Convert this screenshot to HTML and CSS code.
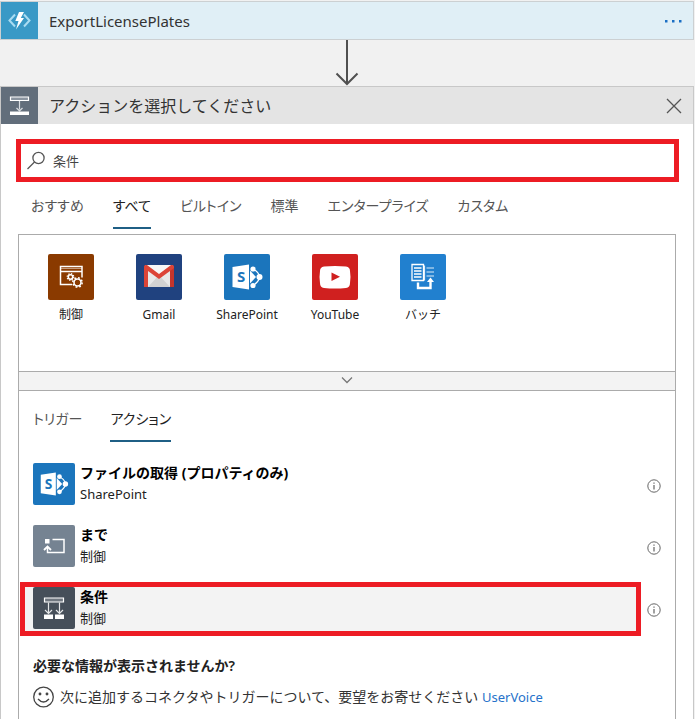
FILE: index.html
```html
<!DOCTYPE html>
<html lang="ja">
<head>
<meta charset="utf-8">
<meta name="viewport" content="width=device-width, initial-scale=1">
<title>アクションを選択してください</title>
<link rel="stylesheet" href="styles.css">
</head>
<body>
<section class="step">
  <span class="step-icon step-icon-function">
    <svg width="37" height="37" viewBox="0 0 37 37"><path d="M14 12.500 L8.500 18.500 L14 24.500 M23 12.500 L28.500 18.500 L23 24.500" fill="none" stroke="#a9dcf2" stroke-width="2"/><path d="M18 10h5l-3.200 6H23l-8 11.500 2.500-8.500h-3.200z" fill="#fff"/></svg>
  </span>
  <h2 class="step-title step-title-latin">ExportLicensePlates</h2>
  <button class="icon-button" type="button" aria-label="メニュー"><svg width="20" height="6" viewBox="0 0 20 6" fill="#1a6fc4"><rect x="1" y="2" width="2.500" height="2.500"/><rect x="8" y="2" width="2.500" height="2.500"/><rect x="15" y="2" width="2.500" height="2.500"/></svg></button>
</section>

<div class="connector"><svg width="24" height="46" viewBox="0 0 24 46" fill="none" stroke="#505050" stroke-width="2"><path d="M12 0V44M1.500 33.500 L12 44 L22.500 33.500"/></svg></div>

<main class="picker">
  <header class="picker-header">
    <span class="step-icon step-icon-picker">
      <svg width="37" height="37" viewBox="0 0 37 37"><path d="M9.500 10h18v3.500h-18z" fill="#8b95a0" stroke="#fff" stroke-width="1.200"/><path d="M18.500 14v8.500M15.500 21l3 3 3-3" fill="none" stroke="#d9dde1" stroke-width="1.200"/><path d="M9 24.500h19v3.500H9z" fill="#fff"/></svg>
    </span>
    <h1 class="step-title">アクションを選択してください</h1>
    <button class="icon-button" type="button" aria-label="閉じる"><svg width="20" height="16" viewBox="0 0 20 16"><path d="M3 1l14 14M17 1L3 15" stroke="#555" stroke-width="1.300"/></svg></button>
  </header>

  <label class="search">
    <svg width="18" height="20" viewBox="0 0 18 20" fill="none" stroke="#555" stroke-width="1.300"><circle cx="11.500" cy="7" r="5.600"/><path d="M7.500 11 L.5 18"/></svg>
    <input type="search" value="条件" aria-label="コネクタとアクションを検索する">
  </label>

  <nav class="tabs">
    <button class="tab" type="button">おすすめ</button>
    <button class="tab tab-active" type="button">すべて</button>
    <button class="tab" type="button">ビルトイン</button>
    <button class="tab" type="button">標準</button>
    <button class="tab" type="button">エンタープライズ</button>
    <button class="tab" type="button">カスタム</button>
  </nav>

  <div class="results">
    <div class="connectors">
      <button class="tile" type="button">
        <svg class="tile-icon control" viewBox="0 0 46 46" fill="none" stroke="#fff"><path d="M24 30.500H12.500v-18h21.500v11M12.500 17.500H34" stroke-width="1.500"/><path d="M12.500 14.500H34" stroke-width="1" opacity=".5"/><circle cx="22.500" cy="23" r="2.200" stroke-width="1.500"/><circle cx="22.500" cy="23" r="3.300" stroke-width="1.300" stroke-dasharray="1.300 1.292"/><circle cx="29.500" cy="28.500" r="3.500" stroke-width="1.600"/><circle cx="29.500" cy="28.500" r="4.700" stroke-width="1.500" stroke-dasharray="1.800 1.891"/></svg>
        <span>制御</span>
      </button>
      <button class="tile" type="button">
        <svg class="tile-icon gmail" viewBox="0 0 46 46"><path d="M9 11h28v22H9z" fill="#e8e8e8"/><path d="M12 33l11-12 11 12z" fill="#d2d2d2"/><path d="M9 11h28L23 22z" fill="#f7f7f7"/><path d="M8 33V12.500Q8 11 9.500 11H11l12 9 12-9h1.500q1.500 0 1.500 1.500V33h-4V17L23 25 12 17v16z" fill="#dc4437"/><path d="M34 17v16h4V14z" fill="#c5352c"/></svg>
        <span>Gmail</span>
      </button>
      <button class="tile" type="button">
        <svg class="tile-icon sharepoint" viewBox="0 0 46 46"><path d="M28.500 15Q34 17 36 23Q34 29 28.500 31.500" fill="none" stroke="#fff" stroke-width="1.200"/><g fill="#fff"><path d="M8.500 13 L25 10.500V35.500L8.500 33z"/><path d="M26 16.500L32 23l-6 6.500z"/><circle cx="29" cy="15" r="2.600"/><circle cx="35.500" cy="23" r="3"/><circle cx="29" cy="31.500" r="2.600"/></g><text x="13" y="28" class="sp-letter">S</text></svg>
        <span>SharePoint</span>
      </button>
      <button class="tile" type="button">
        <svg class="tile-icon youtube" viewBox="0 0 46 46"><path d="M12 12.500Q23 11.500 34 12.500Q38 13 38 17Q39 23 38 29Q38 33.500 34 34Q23 35 12 34Q8 33.500 8 29Q7 23 8 17Q8 13 12 12.500z" fill="#fff"/><path d="M19.500 18.500v8.500l8.500-4.200z" fill="#d0201f"/></svg>
        <span>YouTube</span>
      </button>
      <button class="tile" type="button">
        <svg class="tile-icon batch" viewBox="0 0 46 46" fill="none" stroke="#fff"><path d="M12 10.500h11.500v16H12z" stroke-width="1.300"/><path d="M14 14h7.500M14 17h7.500M14 20h7.500M14 23h7.500" stroke-width="1.300"/><path d="M24.500 11.500v15M26.500 14H34M26.500 18H34M26.500 22H34" stroke-width="1.200" opacity=".85"/><path d="M18 28.500v5.500h12.500v-7" stroke-width="2.400"/><path d="M27 28h7l-3.500-4.500z" fill="#fff" stroke="none"/></svg>
        <span>バッチ</span>
      </button>
    </div>

    <button class="expander" type="button" aria-label="展開"><svg width="14" height="8" viewBox="0 0 14 8"><path d="M2 1.500l5 5 5-5" fill="none" stroke="#777" stroke-width="1.300"/></svg></button>

    <div class="operations">
      <nav class="tabs tabs-operations">
        <button class="tab" type="button">トリガー</button>
        <button class="tab tab-active" type="button">アクション</button>
      </nav>

      <ul class="list">
        <li class="row">
          <button class="operation" type="button">
            <svg class="operation-icon sharepoint" viewBox="0 0 46 46"><path d="M28.500 15Q34 17 36 23Q34 29 28.500 31.500" fill="none" stroke="#fff" stroke-width="1.200"/><g fill="#fff"><path d="M8.500 13 L25 10.500V35.500L8.500 33z"/><path d="M26 16.500L32 23l-6 6.500z"/><circle cx="29" cy="15" r="2.600"/><circle cx="35.500" cy="23" r="3"/><circle cx="29" cy="31.500" r="2.600"/></g><text x="13" y="28" class="sp-letter">S</text></svg>
            <span class="operation-text"><strong>ファイルの取得 (プロパティのみ)</strong><span>SharePoint</span></span>
          </button>
          <button class="info" type="button" aria-label="詳細"><svg width="14" height="14" viewBox="0 0 14 14"><circle cx="7" cy="7" r="6.200" fill="none" stroke="#666"/><path d="M7 6v4.500M7 3.500v1.300" stroke="#555" stroke-width="1.100"/></svg></button>
        </li>
        <li class="row">
          <button class="operation" type="button">
            <svg class="operation-icon until" viewBox="0 0 42 42"><path d="M12 14h4.500v4.500H12z" fill="#fff"/><path d="M19.500 14.500H31v13H14.500V23" fill="none" stroke="#fff" stroke-width="1.500"/><path d="M11 25l3.500-3.500L18 25" fill="none" stroke="#fff" stroke-width="1.800"/></svg>
            <span class="operation-text"><strong>まで</strong><span>制御</span></span>
          </button>
          <button class="info" type="button" aria-label="詳細"><svg width="14" height="14" viewBox="0 0 14 14"><circle cx="7" cy="7" r="6.200" fill="none" stroke="#666"/><path d="M7 6v4.500M7 3.500v1.300" stroke="#555" stroke-width="1.100"/></svg></button>
        </li>
        <li class="row">
          <button class="operation operation-selected" type="button">
            <svg class="operation-icon condition" viewBox="0 0 42 42"><path d="M11.500 11h19v4h-19z" fill="#707780" stroke="#fff" stroke-width="1.200"/><path d="M15.500 15.500v10M26.500 15.500v10M12 23l3.500 3.500L19 23M23 23l3.500 3.500L30 23" fill="none" stroke="#e5e7e9" stroke-width="1.200"/><path d="M11 27.500h9V32h-9zM22 27.500h9V32h-9z" fill="#fff"/></svg>
            <span class="operation-text"><strong>条件</strong><span>制御</span></span>
          </button>
          <button class="info" type="button" aria-label="詳細"><svg width="14" height="14" viewBox="0 0 14 14"><circle cx="7" cy="7" r="6.200" fill="none" stroke="#666"/><path d="M7 6v4.500M7 3.500v1.300" stroke="#555" stroke-width="1.100"/></svg></button>
        </li>
      </ul>

      <footer class="feedback">
        <strong>必要な情報が表示されませんか?</strong>
        <p><svg width="22" height="22" viewBox="0 0 22 22" fill="none" stroke="#444" stroke-width="1.300"><circle cx="10.500" cy="11" r="9.800"/><path d="M5 13q5.500 6 11 0"/><circle cx="7" cy="8" r=".8" fill="#444"/><circle cx="14" cy="8" r=".8" fill="#444"/></svg><span>次に追加するコネクタやトリガーについて、要望をお寄せください <a href="#uservoice">UserVoice</a></span></p>
      </footer>
    </div>
  </div>
</main>
</body>
</html>
```
FILE: styles.css
```css
* {
  box-sizing: border-box;
}

body {
  display: flex;
  flex-direction: column;
  min-height: 100vh;
  margin: 0;
  padding: 1px 1px 0 0;
  background: #f1f1f1;
  color: #222;
  font: 14px/20px "Noto Sans", "Noto Sans CJK JP", sans-serif;
}

button {
  padding: 0;
  border: 0;
  background: none;
  color: inherit;
  font: inherit;
  cursor: pointer;
}

svg {
  display: block;
  flex: none;
}

.sp-letter {
  fill: #1b75bc;
  font: bold 15px "Noto Sans", sans-serif;
}

.step {
  display: flex;
  align-items: center;
  border: 1px solid #ccd0d2;
  background: #e0eff6;
}

.step-icon-function {
  background: #3999c6;
}

.step-icon-picker {
  background: #626e7b;
}

.step-title {
  flex: 1;
  margin: 0 0 0 11px;
  color: #333;
  font-size: 16px;
  font-weight: 400;
}

.step-title-latin {
  font-size: 15px;
}

.icon-button {
  margin-right: 9px;
}

.connector {
  display: flex;
  justify-content: center;
}

.picker {
  display: flex;
  flex: 1;
  flex-direction: column;
  border: 1px solid #c8c8c8;
  border-bottom: 0;
  background: #fff;
}

.picker-header {
  display: flex;
  align-items: center;
  background: #e4e4e4;
}

.search {
  display: flex;
  align-items: center;
  gap: 8px;
  height: 43px;
  margin: 15px 14px 0 15px;
  padding: 0 6px;
  border: 5px solid #ed1c24;
}

.search input {
  flex: 1;
  min-width: 0;
  padding: 0;
  border: 0;
  outline: 0;
  background: none;
  color: #444;
  font: inherit;
  font-size: 13px;
}

.tabs {
  display: flex;
  gap: 29px;
  margin: 12px 30px 5px;
}

.tab {
  height: 35px;
  padding-bottom: 10px;
  border-bottom: 2px solid transparent;
  color: #555;
  font-size: 14px;
  font-feature-settings: "palt";
  white-space: nowrap;
}

.tab-active {
  border-bottom-color: #1f5f85;
  color: #222;
}

.results {
  display: flex;
  flex: 1;
  flex-direction: column;
  margin: 0 17px;
  border: 1px solid #ababab;
  border-bottom: 0;
}

.connectors {
  display: flex;
  flex-wrap: wrap;
  align-content: flex-start;
  min-height: 136px;
  padding: 19px 8px;
}

.tile {
  display: flex;
  flex-direction: column;
  align-items: center;
  gap: 5px;
  width: 88px;
  font-size: 12px;
}

.tile-icon {
  width: 46px;
  height: 46px;
  border-radius: 2px;
}

.control {
  background: #8a3a00;
}

.gmail {
  background: #20427f;
}

.sharepoint {
  background: #1b75bc;
}

.youtube {
  background: #d0201f;
}

.batch {
  background: #2180cf;
}

.until {
  background: #758392;
}

.condition {
  background: #464f5a;
}

.expander {
  display: flex;
  align-items: center;
  justify-content: center;
  height: 20px;
  padding-bottom: 2px;
  border: solid #ababab;
  border-width: 1px 0;
  background: #f3f3f3;
}

.tabs-operations {
  gap: 28px;
  margin: 16px 14px;
}

.list {
  display: grid;
  gap: 8px;
  margin: 0;
  padding: 0 14px 0 1px;
  list-style: none;
}

.row {
  display: flex;
  align-items: center;
  gap: 6px;
}

.operation {
  display: flex;
  flex: 1;
  gap: 5px;
  padding: 0 8px 2px;
  border: 5px solid transparent;
  text-align: left;
}

.operation-selected {
  border-color: #ed1c24;
  background: #f3f3f3;
}

.operation-icon {
  width: 42px;
  height: 42px;
  border-radius: 2px;
}

.operation-text {
  display: grid;
  font-size: 13px;
}

.operation-text strong {
  color: #000;
  font-size: 14px;
}

.info {
  padding-top: 2px;
}

.feedback {
  padding: 20px 14px;
}

.feedback strong {
  font-weight: 600;
}

.feedback p {
  display: flex;
  align-items: center;
  gap: 5px;
  margin: 10px 0 0;
  color: #333;
}

.feedback a {
  color: #2672ca;
  font-size: 13px;
  text-decoration: none;
}
```
